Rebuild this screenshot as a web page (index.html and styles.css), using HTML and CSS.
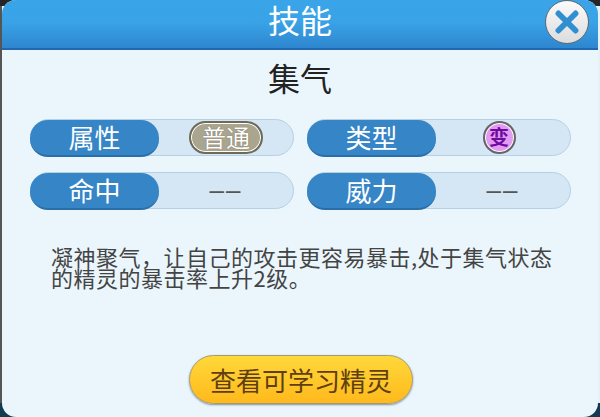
FILE: index.html
```html
<!DOCTYPE html>
<html lang="zh-CN">
<head>
    <meta charset="UTF-8">
    <title>技能</title>
    <link rel="stylesheet" href="styles.css">
</head>
<body>
    <div class="panel">
        <header class="panel-header">
            <h1>技能</h1>
            <button class="close-btn" aria-label="关闭">
                <svg viewBox="0 0 44 44" width="44" height="44">
                    <path d="M13 13 L31 31 M31 13 L13 31" stroke="#2f8fd0" stroke-width="6" stroke-linecap="round" fill="none"/>
                </svg>
            </button>
        </header>

        <h2 class="skill-name">集气</h2>

        <div class="stats">
            <div class="stat">
                <div class="stat-label">属性</div>
                <div class="stat-value"><span class="tag-normal">普通</span></div>
            </div>
            <div class="stat">
                <div class="stat-label">类型</div>
                <div class="stat-value"><span class="tag-kind">变</span></div>
            </div>
            <div class="stat">
                <div class="stat-label">命中</div>
                <div class="stat-value">––</div>
            </div>
            <div class="stat">
                <div class="stat-label">威力</div>
                <div class="stat-value">––</div>
            </div>
        </div>

        <p class="desc">凝神聚气，让自己的攻击更容易暴击,处于集气状态<br>的精灵的暴击率上升2级。</p>

        <div class="actions">
            <button class="learn-btn">查看可学习精灵</button>
        </div>
    </div>
</body>
</html>
```

FILE: styles.css
```css
html, body {
    margin: 0;
    height: 100%;
}

body {
    /* dark game scene shows round the panel corners, light rim on the right */
    background:
        linear-gradient(#262626, #262626) top / 100% 6px no-repeat,
        linear-gradient(#123a50, #123a50) bottom / 100% 14px no-repeat,
        linear-gradient(to right, #555 2px, #e6f1f7 2px);
    font-family: "Noto Sans CJK SC", "Liberation Sans", sans-serif;
    overflow: hidden;
}

.panel {
    box-sizing: border-box;
    width: 596px;
    height: 417px;
    margin-left: 2px;
    background-color: #eaf6fc;
    border-radius: 14px;
    display: flex;
    flex-direction: column;
    overflow: hidden;
}

.panel-header {
    position: relative;
    flex: none;
    height: 48px;
    background: linear-gradient(#39a4e8, #3aa3e7 45%, #2e86cf);
    border-bottom: 2px solid #2168b4;
    text-align: center;
}

.panel-header h1 {
    margin: 0;
    font-size: 32px;
    font-weight: 400;
    line-height: 38px;
    color: #fff;
}

.close-btn {
    position: absolute;
    top: 0;
    right: 9px;
    width: 44px;
    height: 44px;
    padding: 0;
    border: 1px solid #5b6a75;
    border-radius: 50%;
    background: linear-gradient(#fbfbfb, #dcdcdc);
    display: flex;
    align-items: center;
    justify-content: center;
}

.skill-name {
    margin: 6px 0 0;
    font-size: 32px;
    font-weight: 400;
    line-height: 42px;
    text-align: center;
    color: #222;
}

.stats {
    display: grid;
    grid-template-columns: 264px 264px;
    column-gap: 13px;
    row-gap: 16px;
    margin: 21px 0 0 28px;
}

.stat {
    display: flex;
    height: 37px;
    box-sizing: border-box;
    border: 1px solid #b6d0e4;
    border-radius: 19px;
    background-color: #d5e6f5;
}

.stat-label {
    flex: none;
    width: 129px;
    height: 35px;
    margin: 0 0 0 -1px;
    border-radius: 18px;
    border-bottom: 2px solid #2a6ea8;
    background-color: #3585c7;
    color: #fff;
    font-size: 26px;
    line-height: 33px;
    text-align: center;
}

.stat-value {
    flex: 1;
    display: flex;
    align-items: center;
    justify-content: center;
    color: #555;
    font-family: "Liberation Sans", sans-serif;
    font-size: 26px;
    letter-spacing: 2px;
}

.tag-normal {
    box-sizing: border-box;
    width: 74px;
    height: 33px;
    border: 2px solid #6f6a58;
    box-shadow: inset 0 0 0 1px #fff;
    border-radius: 17px;
    background-color: #aaa58f;
    color: #fff;
    font-family: "Noto Sans CJK SC", sans-serif;
    font-size: 24px;
    line-height: 27px;
    letter-spacing: 0;
    text-align: center;
    text-shadow: 0 0 1px #5e5a48;
}

.tag-kind {
    box-sizing: border-box;
    width: 33px;
    height: 33px;
    margin-right: 8px;
    border: 2px solid #666;
    box-shadow: inset 0 0 0 1px #fff;
    border-radius: 50%;
    background-color: #e39af2;
    color: #6f0aa0;
    font-family: "Noto Sans CJK SC", sans-serif;
    font-size: 20px;
    font-weight: 700;
    line-height: 27px;
    letter-spacing: 0;
    text-align: center;
}

.desc {
    margin: 37px 0 0 49px;
    font-size: 22px;
    letter-spacing: 0.5px;
    line-height: 21px;
    white-space: nowrap;
    color: #444;
}

.actions {
    margin-top: 67px;
    padding-left: 2px;
    display: flex;
    justify-content: center;
}

.learn-btn {
    width: 224px;
    height: 49px;
    padding: 0;
    border: 1px solid #a59a6c;
    border-radius: 25px;
    background: linear-gradient(#ffd83a, #ffb91c);
    box-shadow: 0 1px 2px rgba(60, 70, 90, 0.6);
    color: #5f3f10;
    font-family: inherit;
    font-size: 26px;
}
```
